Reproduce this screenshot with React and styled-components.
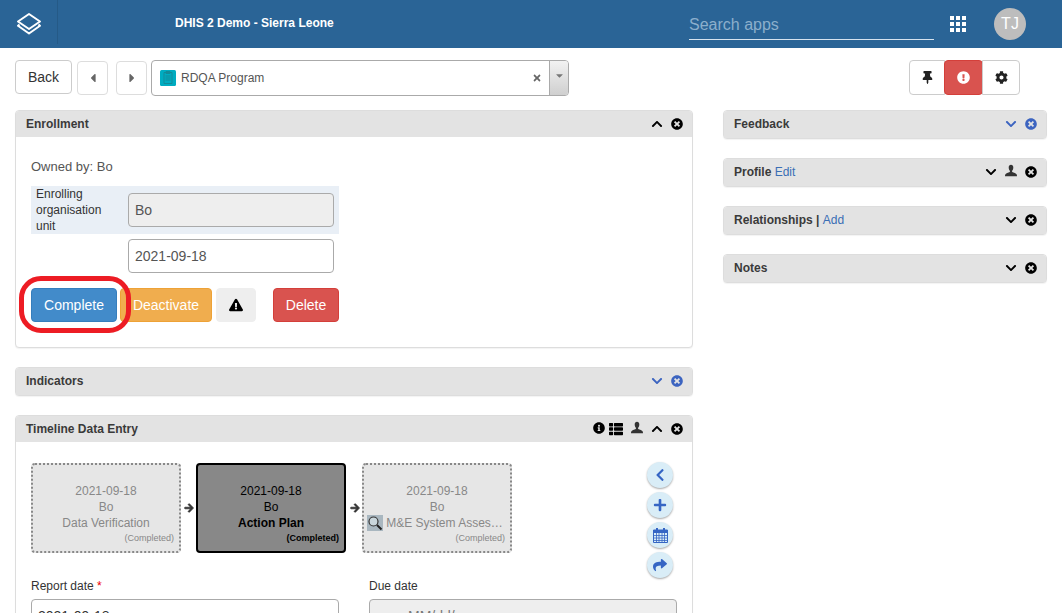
import React from 'react'
import styled, { createGlobalStyle } from 'styled-components'
import {
  FaCaretLeft, FaCaretRight, FaChevronUp, FaChevronDown, FaChevronLeft, FaTimesCircle, FaThumbtack,
  FaExclamationCircle, FaCog, FaExclamationTriangle, FaInfoCircle, FaThList, FaPlus, FaShare,
  FaArrowRight, FaTimes, FaCaretDown,
} from 'react-icons/fa'

/**** Styles ****/
const Global = createGlobalStyle`
  html, body { margin: 0; height: 100%; overflow: hidden; background: #fff; }
  body { font-family: "Liberation Sans", Arial, sans-serif; font-size: 12px; color: #333; }
  * { box-sizing: border-box; }
`
const Header = styled.header`
  height: 48px;
  background: #2a6496;
  display: flex;
  align-items: flex-start;
  color: #fff;
`
const LogoCell = styled.div`
  width: 58px;
  height: 44px;
  border-right: 1px solid #255a87;
  display: flex;
  align-items: center;
  justify-content: center;
  padding-top: 3px;
`
const Title = styled.div`
  margin-left: 117px;
  line-height: 47px;
  font-size: 12px;
  font-weight: bold;
  flex: 1;
`
const Search = styled.div`
  width: 245px;
  height: 32px;
  margin-top: 8px;
  border-bottom: 1px solid #d5e2ee;
  color: #8cafcc;
  font-size: 16px;
  line-height: 33px;
`
const Grid = styled.div`
  margin: 16px 0 0 16px;
  display: grid;
  grid-template-columns: repeat(3, 4px);
  grid-auto-rows: 4px;
  gap: 2px;
`
const Dot = styled.span`
  background: #fff;
`
const Avatar = styled.div`
  width: 32px;
  height: 32px;
  margin: 8px 36px 0 28px;
  border-radius: 50%;
  background: #bdbdbd;
  text-align: center;
  line-height: 32px;
  font-size: 16px;
`
const Toolbar = styled.div`
  display: flex;
  align-items: flex-start;
  padding: 12px 42px 0 15px;
  height: 62px;
`
const Button = styled.div`
  height: 34px;
  background: #fff;
  border: 1px solid #ccc;
  border-radius: 4px;
  display: flex;
  align-items: center;
  justify-content: center;
  font-size: 14px;
  color: #333;
`
const BackButton = styled(Button)`
  width: 57px;
`
const NavButton = styled(Button)`
  width: 31px;
  margin: 1px 0 0 ${p => p.$gap}px;
  border-color: #ddd;
  color: #666;
  font-size: 14px;
`
const ProgramSelect = styled.div`
  width: 418px;
  height: 36px;
  margin-left: 4px;
  border: 1px solid #aaa;
  border-radius: 4px;
  display: flex;
  align-items: center;
  padding-left: 8px;
  font-size: 12px;
  color: #555;
  overflow: hidden;
`
const ProgramName = styled.span`
  flex: 1;
  margin-left: 5px;
`
const ClearIcon = styled(FaTimes)`
  font-size: 10px;
  color: #666;
  margin-right: 7px;
`
const SelectCaret = styled.span`
  width: 19px;
  height: 100%;
  background: linear-gradient(#f2f2f2, #cfcfcf);
  border-left: 1px solid #aaa;
  display: flex;
  align-items: flex-start;
  justify-content: center;
  padding-top: 9px;
  font-size: 11px;
  color: #777;
`
const RightTools = styled.div`
  margin-left: auto;
  display: flex;
`
const ToolButton = styled(Button)`
  width: ${p => p.$w}px;
  height: 35px;
  margin-left: -1px;
  background: ${p => p.$active ? '#d9534f' : '#fff'};
  border-color: ${p => p.$active ? '#d43f3a' : '#ccc'};
  color: ${p => p.$active ? '#fff' : '#222'};
  border-radius: ${p => p.$radius};
  font-size: 13px;
`
const Columns = styled.main`
  display: grid;
  grid-template-columns: 678px 324px;
  gap: 30px;
  padding: 0 15px;
`
const Column = styled.div`
  display: flex;
  flex-direction: column;
  gap: 19px;
`
const Panel = styled.section`
  border: 1px solid #ddd;
  border-radius: 4px;
  background: #fff;
  box-shadow: 0 1px 1px rgba(0, 0, 0, .05);
`
const PanelHead = styled.div`
  height: ${p => p.$open ? 26 : 27}px;
  background: #e3e3e3;
  border-radius: 3px 3px 0 0;
  display: flex;
  align-items: center;
  padding: 0 9px ${p => p.$open ? 0 : 1}px 10px;
  font-weight: bold;
  color: #3a3a3a;
  gap: 8px;
`
const HeadTitle = styled.div`
  flex: 1;
`
const Link = styled.a`
  color: #3a6eb5;
  font-weight: normal;
`
const HeadIcon = styled.span`
  display: flex;
  width: ${p => p.$w || 12}px;
  justify-content: center;
  font-size: ${p => p.$size || 12}px;
  color: ${p => p.$blue ? '#3c64c0' : '#000'};
`
const IconGroup = styled.div`
  display: flex;
  gap: 4px;
`
const Bust = styled.svg`
  width: 12px;
  height: 13px;
  margin-top: -3px;
  fill: #333;
`
const EnrollBody = styled.div`
  padding: 22px 15px 25px;
  position: relative;
`
const Owned = styled.div`
  font-size: 13px;
  line-height: 15px;
  color: #555;
  margin-bottom: 12px;
`
const OrgRow = styled.div`
  width: 308px;
  height: 48px;
  background: #e9eff6;
  display: flex;
  align-items: center;
`
const OrgLabel = styled.div`
  width: 97px;
  padding: 0 20px 0 5px;
  line-height: 16px;
`
const Input = styled.div`
  width: 206px;
  height: 34px;
  border: 1px solid #aaa;
  border-radius: 4px;
  background: ${p => p.$disabled ? '#eee' : '#fff'};
  font-size: 14px;
  line-height: 32px;
  padding-left: 6px;
  color: #555;
`
const DateRow = styled.div`
  margin: 5px 0 15px 97px;
`
const Actions = styled.div`
  display: flex;
`
const ActionButton = styled.div`
  height: 34px;
  width: ${p => p.$w}px;
  margin-left: ${p => p.$gap || 0}px;
  background: ${p => p.$bg};
  border: 1px solid ${p => p.$line};
  border-radius: 4px;
  color: ${p => p.$dark ? '#000' : '#fff'};
  font-size: 14px;
  display: flex;
  align-items: center;
  justify-content: center;
`
const RedRing = styled.div`
  position: absolute;
  left: 3px;
  top: 139px;
  width: 112px;
  height: 57px;
  border: 5px solid #ed1c24;
  border-radius: 22px;
`
const TimelineBody = styled.div`
  padding: 21px 15px 0;
`
const StageRow = styled.div`
  display: flex;
  align-items: flex-start;
  height: 116px;
`
const Stage = styled.div`
  width: 150px;
  height: 90px;
  border-radius: 4px;
  border: 2px ${p => p.$active ? 'solid #000' : 'dotted #888'};
  background: ${p => p.$active ? '#888' : '#e6e6e6'};
  color: ${p => p.$active ? '#000' : '#888'};
  text-align: center;
  line-height: 16px;
  padding: 18px 5px 0;
`
const StageName = styled.div`
  white-space: nowrap;
  font-weight: ${p => p.$active ? 'bold' : 'normal'};
`
const Completed = styled.div`
  font-size: 9px;
  line-height: 12px;
  text-align: right;
  margin-top: 1px;
  font-weight: ${p => p.$active ? 'bold' : 'normal'};
`
const Arrow = styled.div`
  width: ${p => p.$w}px;
  height: 90px;
  display: flex;
  align-items: center;
  justify-content: center;
  padding-left: 1px;
  font-size: 10px;
  color: #333;
  svg { stroke: currentColor; stroke-width: 40px; }
`
const Lens = styled.span`
  display: inline-flex;
  width: 16px;
  height: 16px;
  margin: 0 3px 0 -4px;
  background: #a9b7c0;
  vertical-align: top;
`
const SideButtons = styled.div`
  margin-left: auto;
  margin-right: 4px;
  margin-top: -1px;
  display: flex;
  flex-direction: column;
  gap: 4px;
`
const RoundButton = styled.div`
  width: 26px;
  height: 26px;
  border-radius: 50%;
  background: #d9edf7;
  box-shadow: 0 1px 2px rgba(0, 0, 0, .35);
  color: #3565c4;
  font-size: 14px;
  display: flex;
  align-items: center;
  justify-content: center;
`
const Fields = styled.div`
  display: grid;
  grid-template-columns: 308px 308px;
  gap: 30px;
`
const FieldLabel = styled.div`
  line-height: 14px;
  margin-bottom: 6px;
  color: #333;
`
const Required = styled.span`
  color: #e00;
`
const FieldInput = styled(Input)`
  width: 100%;
  color: ${p => p.$disabled ? '#777' : '#333'};
  padding-left: ${p => p.$disabled ? 38 : 6}px;
`

/**** Drawings ****/
const Logo = () => (
  <svg width="26" height="24" viewBox="0 0 26 24" fill="none" stroke="#fff" strokeWidth="2" strokeLinejoin="round">
    <path d="M13 2 L24 9.500 L13 17 L2 9.500 Z" />
    <path d="M3.500 12.500 L2 13.800 L13 21.500 L24 13.800 L22.500 12.500" />
  </svg>
)
const ProgramIcon = () => (
  <svg width="16" height="16" viewBox="0 0 16 16">
    <rect width="16" height="16" rx="1.500" fill="#00acc1" />
    <path d="M4 2.500h8v11H4z" fill="none" stroke="#138a99" strokeWidth="1" />
    <path d="M6 1.500h4v2H6zM5.500 6h5M5.500 8h5M5.500 10h5" stroke="#138a99" fill="none" strokeWidth="1" />
  </svg>
)
const UserBust = () => (
  <Bust viewBox="0 0 13 13">
    <path d="M4 3.200C4 1.400 5 .3 6.500 .3S9 1.400 9 3.200c0 1.600-.6 3.100-1.300 3.700v1.300c1.800.7 4.400 1.400 5 2.600.2.500.3 1.300.3 1.900H0c0-.6.1-1.400.3-1.900.6-1.200 3.200-1.900 5-2.600V6.900C4.600 6.300 4 4.800 4 3.200z" />
  </Bust>
)
const CalendarGlyph = () => (
  <svg width="15" height="15" viewBox="0 0 15 15" fill="#3565c4">
    <path d="M3 0h2v3H3zM10 0h2v3h-2z" />
    <path d="M.5 2h14v12.500H.5z" fill="none" stroke="#3565c4" />
    <path d="M.5 2h14v3H.5z" />
    <path d="M1 7.500h13M1 10h13M1 12.500h13M3.500 5v9M6 5v9M9 5v9M11.500 5v9" stroke="#3565c4" strokeWidth=".8" />
  </svg>
)
const LensGlyph = () => (
  <svg width="16" height="16" viewBox="0 0 16 16">
    <circle cx="6.500" cy="6.500" r="4.500" fill="#c9d6dc" stroke="#333" strokeWidth="1.200" />
    <path d="M10 10l4.500 4.500" stroke="#222" strokeWidth="2" />
  </svg>
)
const CloseIcon = ({ blue }) => <HeadIcon $blue={blue}><FaTimesCircle /></HeadIcon>

/**** Component ****/
const SidePanel = ({ children, blue, bust }) => (
  <Panel>
    <PanelHead>
      <HeadTitle>{children}</HeadTitle>
      <HeadIcon $blue={blue}><FaChevronDown /></HeadIcon>
      {bust && <UserBust />}
      <CloseIcon blue={blue} />
    </PanelHead>
  </Panel>
)

const App = () => {
  const dots = Array.from({ length: 9 })

  return (
    <>
      <Global />
      <Header>
        <LogoCell><Logo /></LogoCell>
        <Title>DHIS 2 Demo - Sierra Leone</Title>
        <Search>Search apps</Search>
        <Grid>{dots.map((_, i) => <Dot key={i} />)}</Grid>
        <Avatar>TJ</Avatar>
      </Header>

      <Toolbar>
        <BackButton>Back</BackButton>
        <NavButton $gap={5}><FaCaretLeft /></NavButton>
        <NavButton $gap={8}><FaCaretRight /></NavButton>
        <ProgramSelect>
          <ProgramIcon />
          <ProgramName>RDQA Program</ProgramName>
          <ClearIcon />
          <SelectCaret><FaCaretDown /></SelectCaret>
        </ProgramSelect>
        <RightTools>
          <ToolButton $w={36} $radius="4px 0 0 4px"><FaThumbtack /></ToolButton>
          <ToolButton $w={39} $active $radius="4px"><FaExclamationCircle /></ToolButton>
          <ToolButton $w={38} $radius="0 4px 4px 0"><FaCog /></ToolButton>
        </RightTools>
      </Toolbar>

      <Columns>
        <Column>
          <Panel>
            <PanelHead $open>
              <HeadTitle>Enrollment</HeadTitle>
              <HeadIcon><FaChevronUp /></HeadIcon>
              <CloseIcon />
            </PanelHead>
            <EnrollBody>
              <Owned>Owned by: Bo</Owned>
              <OrgRow>
                <OrgLabel>Enrolling organisation unit</OrgLabel>
                <Input $disabled>Bo</Input>
              </OrgRow>
              <DateRow><Input>2021-09-18</Input></DateRow>
              <Actions>
                <ActionButton $w={86} $bg="#428bca" $line="#357ebd">Complete</ActionButton>
                <ActionButton $w={92} $gap={3} $bg="#f0ad4e" $line="#eea236">Deactivate</ActionButton>
                <ActionButton $w={40} $gap={4} $bg="#eee" $line="#eee" $dark><FaExclamationTriangle /></ActionButton>
                <ActionButton $w={66} $gap={17} $bg="#d9534f" $line="#d43f3a">Delete</ActionButton>
              </Actions>
              <RedRing />
            </EnrollBody>
          </Panel>

          <Panel>
            <PanelHead>
              <HeadTitle>Indicators</HeadTitle>
              <HeadIcon $blue><FaChevronDown /></HeadIcon>
              <CloseIcon blue />
            </PanelHead>
          </Panel>

          <Panel>
            <PanelHead $open>
              <HeadTitle>Timeline Data Entry</HeadTitle>
              <IconGroup>
                <HeadIcon><FaInfoCircle /></HeadIcon>
                <HeadIcon $w={14} $size={14}><FaThList /></HeadIcon>
              </IconGroup>
              <UserBust />
              <HeadIcon><FaChevronUp /></HeadIcon>
              <CloseIcon />
            </PanelHead>
            <TimelineBody>
              <StageRow>
                <Stage>
                  2021-09-18<br />Bo
                  <StageName>Data Verification</StageName>
                  <Completed>(Completed)</Completed>
                </Stage>
                <Arrow $w={15}><FaArrowRight /></Arrow>
                <Stage $active>
                  2021-09-18<br />Bo
                  <StageName $active>Action Plan</StageName>
                  <Completed $active>(Completed)</Completed>
                </Stage>
                <Arrow $w={16}><FaArrowRight /></Arrow>
                <Stage>
                  2021-09-18<br />Bo
                  <StageName><Lens><LensGlyph /></Lens>M&amp;E System Asses…</StageName>
                  <Completed>(Completed)</Completed>
                </Stage>
                <SideButtons>
                  <RoundButton><FaChevronLeft /></RoundButton>
                  <RoundButton><FaPlus /></RoundButton>
                  <RoundButton><CalendarGlyph /></RoundButton>
                  <RoundButton><FaShare /></RoundButton>
                </SideButtons>
              </StageRow>
              <Fields>
                <div>
                  <FieldLabel>Report date <Required>*</Required></FieldLabel>
                  <FieldInput>2021-09-18</FieldInput>
                </div>
                <div>
                  <FieldLabel>Due date</FieldLabel>
                  <FieldInput $disabled>MM/dd/yyyy</FieldInput>
                </div>
              </Fields>
            </TimelineBody>
          </Panel>
        </Column>

        <Column>
          <SidePanel blue>Feedback</SidePanel>
          <SidePanel bust>Profile <Link>Edit</Link></SidePanel>
          <SidePanel>Relationships | <Link>Add</Link></SidePanel>
          <SidePanel>Notes</SidePanel>
        </Column>
      </Columns>
    </>
  )
}

export default App
